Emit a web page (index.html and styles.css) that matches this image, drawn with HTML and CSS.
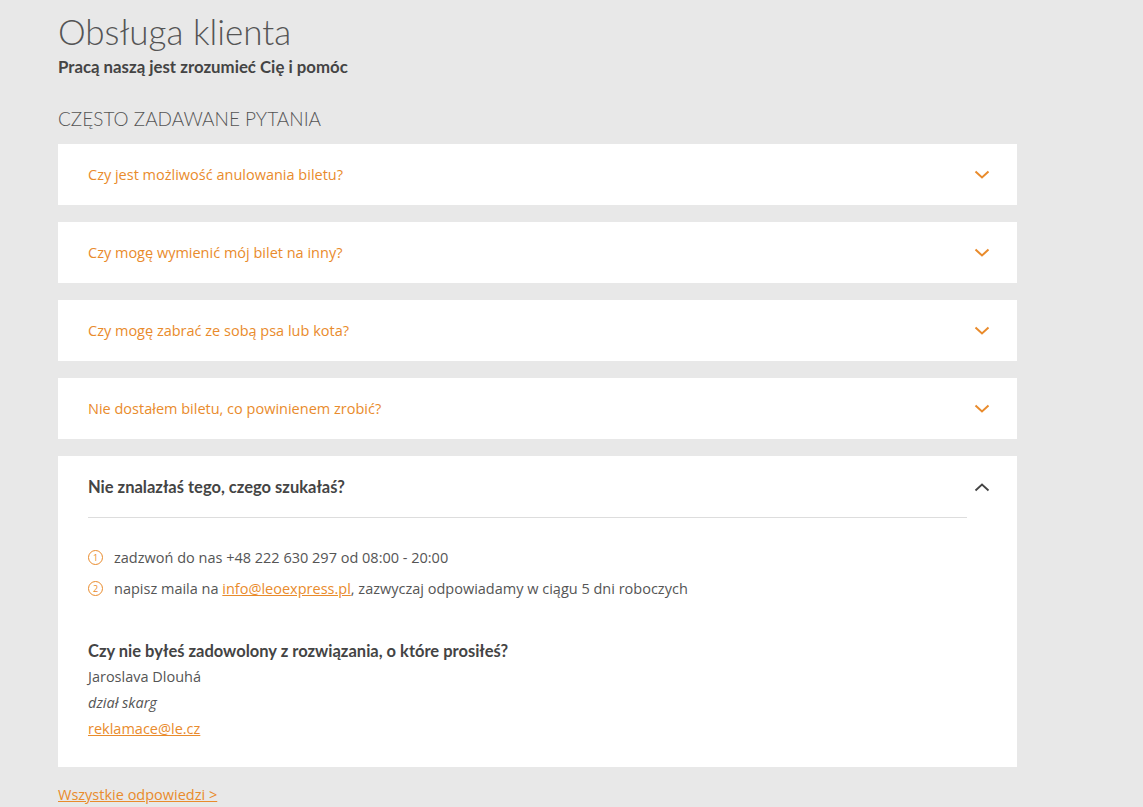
FILE: index.html
```html
<!DOCTYPE html>
<html lang="pl">
<head>
    <meta charset="UTF-8">
    <meta name="viewport" content="width=device-width, initial-scale=1.0">
    <title>Obsługa klienta</title>
    <link rel="stylesheet" href="styles.css">
</head>
<body>
    <div class="page">
        <h1 class="title">Obsługa klienta</h1>
        <p class="subtitle">Pracą naszą jest zrozumieć Cię i pomóc</p>

        <h2 class="section-title">Często zadawane pytania</h2>

        <div class="faq">
            <div class="faq-item">
                <span class="question">Czy jest możliwość anulowania biletu?</span>
                <svg class="chevron" width="16" height="10" viewBox="0 0 16 10"><path d="M1.5 1.5 L8 7.5 L14.5 1.5" fill="none" stroke="#e98b2c" stroke-width="2"/></svg>
            </div>
            <div class="faq-item">
                <span class="question">Czy mogę wymienić mój bilet na inny?</span>
                <svg class="chevron" width="16" height="10" viewBox="0 0 16 10"><path d="M1.5 1.5 L8 7.5 L14.5 1.5" fill="none" stroke="#e98b2c" stroke-width="2"/></svg>
            </div>
            <div class="faq-item">
                <span class="question">Czy mogę zabrać ze sobą psa lub kota?</span>
                <svg class="chevron" width="16" height="10" viewBox="0 0 16 10"><path d="M1.5 1.5 L8 7.5 L14.5 1.5" fill="none" stroke="#e98b2c" stroke-width="2"/></svg>
            </div>
            <div class="faq-item">
                <span class="question">Nie dostałem biletu, co powinienem zrobić?</span>
                <svg class="chevron" width="16" height="10" viewBox="0 0 16 10"><path d="M1.5 1.5 L8 7.5 L14.5 1.5" fill="none" stroke="#e98b2c" stroke-width="2"/></svg>
            </div>

            <div class="faq-open">
                <div class="open-head">
                    <span class="open-title">Nie znalazłaś tego, czego szukałaś?</span>
                    <svg class="chevron" width="16" height="10" viewBox="0 0 16 10"><path d="M1.5 8.5 L8 2.5 L14.5 8.5" fill="none" stroke="#444" stroke-width="1.8"/></svg>
                </div>
                <div class="open-body">
                    <ul class="contact-list">
                        <li><span class="num">1</span>zadzwoń do nas +48 222 630 297 od 08:00 - 20:00</li>
                        <li><span class="num">2</span>napisz maila na <a href="#">info@leoexpress.pl</a>, zazwyczaj odpowiadamy w ciągu 5 dni roboczych</li>
                    </ul>
                    <p class="complaint-title">Czy nie byłeś zadowolony z rozwiązania, o które prosiłeś?</p>
                    <p class="line">Jaroslava Dlouhá</p>
                    <p class="line"><em>dział skarg</em></p>
                    <p class="line"><a href="#">reklamace@le.cz</a></p>
                </div>
            </div>
        </div>

        <a href="#" class="all-link">Wszystkie odpowiedzi &gt;</a>
    </div>
</body>
</html>
```

FILE: styles.css
```css
body {
    margin: 0;
    padding: 0;
    background-color: #e8e8e8;
    font-family: Lato, "Open Sans", Arial, sans-serif;
    color: #4a4a4a;
}
.page {
    width: 959px;
    margin-left: 58px;
    padding-top: 9px;
}
.title {
    margin: 0;
    font-size: 35px;
    font-weight: 300;
    line-height: 44px;
    color: #555;
}
.subtitle {
    margin: 4px 0 0;
    font-size: 16.8px;
    font-weight: 700;
    line-height: 20px;
    color: #444;
}
.section-title {
    margin: 30px 0 0;
    font-size: 19px;
    font-weight: 300;
    text-transform: uppercase;
    line-height: 24px;
    color: #555;
}
.faq {
    margin-top: 13px;
    display: flex;
    flex-direction: column;
    gap: 17px;
}
.faq-item {
    background-color: #fff;
    height: 61px;
    padding: 0 27px 0 30px;
    display: flex;
    align-items: center;
    justify-content: space-between;
    box-sizing: border-box;
}
.question {
    font-family: "Open Sans", Arial, sans-serif;
    font-size: 14.5px;
    color: #e98b2c;
}
.faq-open {
    background-color: #fff;
    padding: 0 27px 25px 30px;
}
.open-head {
    height: 61px;
    display: flex;
    align-items: center;
    justify-content: space-between;
}
.open-title {
    font-size: 16.5px;
    font-weight: 700;
    color: #444;
}
.open-body {
    margin-right: 23px;
    border-top: 1px solid #ddd;
    padding-top: 24px;
}
.contact-list {
    list-style: none;
    margin: 0;
    padding: 0;
    font-family: "Open Sans", Arial, sans-serif;
    font-size: 14.5px;
    color: #555;
}
.contact-list li {
    height: 31px;
    line-height: 31px;
}
.num {
    display: inline-block;
    vertical-align: middle;
    width: 13px;
    height: 13px;
    border: 1px solid #e98b2c;
    border-radius: 50%;
    color: #e98b2c;
    font-size: 9px;
    line-height: 13px;
    text-align: center;
    margin: -3px 11px 0 0;
}
a {
    color: #e98b2c;
    text-decoration: underline;
}
.complaint-title {
    margin: 35px 0 0;
    font-size: 16.5px;
    font-weight: 700;
    line-height: 25px;
    color: #444;
}
.line {
    margin: 0;
    font-family: "Open Sans", Arial, sans-serif;
    font-size: 14.5px;
    line-height: 26px;
    color: #555;
}
.all-link {
    display: inline-block;
    margin-top: 18px;
    font-family: "Open Sans", Arial, sans-serif;
    font-size: 14.5px;
}
```
